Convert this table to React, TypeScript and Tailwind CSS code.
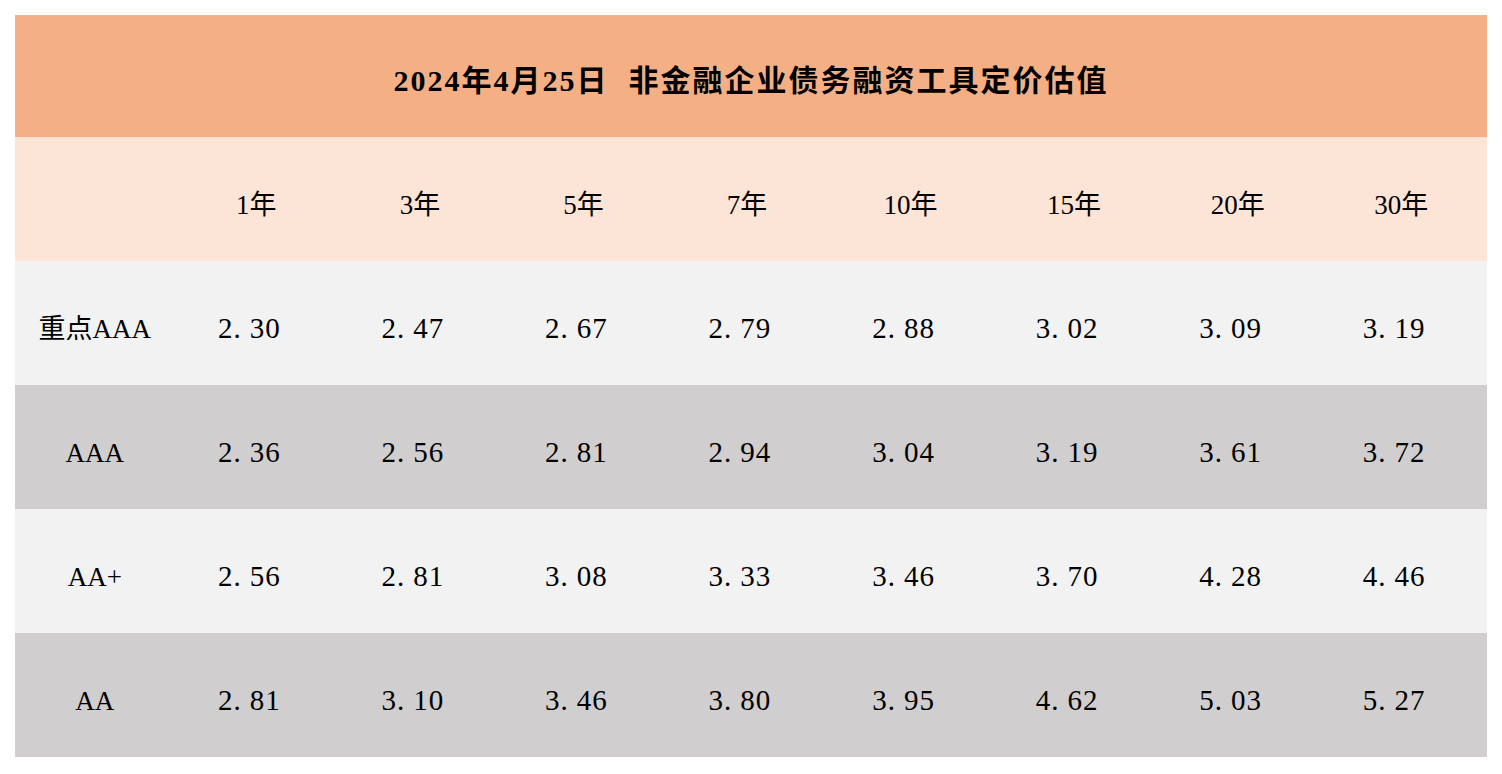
import React from "react";

const terms = ["1年", "3年", "5年", "7年", "10年", "15年", "20年", "30年"];

const rows: { label: string; values: string[]; shade: string }[] = [
  { label: "重点AAA", values: ["2.30", "2.47", "2.67", "2.79", "2.88", "3.02", "3.09", "3.19"], shade: "bg-[#f2f2f2]" },
  { label: "AAA", values: ["2.36", "2.56", "2.81", "2.94", "3.04", "3.19", "3.61", "3.72"], shade: "bg-[#d0cece]" },
  { label: "AA+", values: ["2.56", "2.81", "3.08", "3.33", "3.46", "3.70", "4.28", "4.46"], shade: "bg-[#f2f2f2]" },
  { label: "AA", values: ["2.81", "3.10", "3.46", "3.80", "3.95", "4.62", "5.03", "5.27"], shade: "bg-[#d0cece]" },
];

// the sheet's font gives the decimal point a full digit cell
const Num: React.FC<{ value: string }> = ({ value }) => {
  const [whole, frac] = value.split(".");
  return (
    <span className="tracking-[1px]">
      {whole}
      <span className="mr-[8px]">.</span>
      {frac}
    </span>
  );
};

const App: React.FC = () => {
  return (
    <div className="min-h-screen bg-white p-[15px] font-['Liberation_Serif','Noto_Sans_CJK_SC',serif] text-black">
      <div className="w-[1472px]">
        {/* Title */}
        <div className="flex h-[122px] items-center justify-center bg-[#f4b084] pt-2 text-[30px] font-bold tracking-[2px]">
          2024年4月25日<span className="inline-block w-[20px]" />非金融企业债务融资工具定价估值
        </div>

        {/* Term header */}
        <div className="grid h-[124px] grid-cols-9 bg-[#fce4d6] text-[27px]">
          <div />
          {terms.map((t) => (
            <div key={t} className="flex items-center justify-center pr-2 pt-3">
              {t}
            </div>
          ))}
        </div>

        {/* Rating rows */}
        {rows.map((row) => (
          <div key={row.label} className={`grid h-[124px] grid-cols-9 text-[27px] ${row.shade}`}>
            <div className="flex items-center justify-center pr-1 pt-3">{row.label}</div>
            {row.values.map((v, i) => (
              <div key={i} className="flex items-center justify-center pr-[22px] pt-3 text-[29px]">
                <Num value={v} />
              </div>
            ))}
          </div>
        ))}
      </div>
    </div>
  );
};

export default App;
